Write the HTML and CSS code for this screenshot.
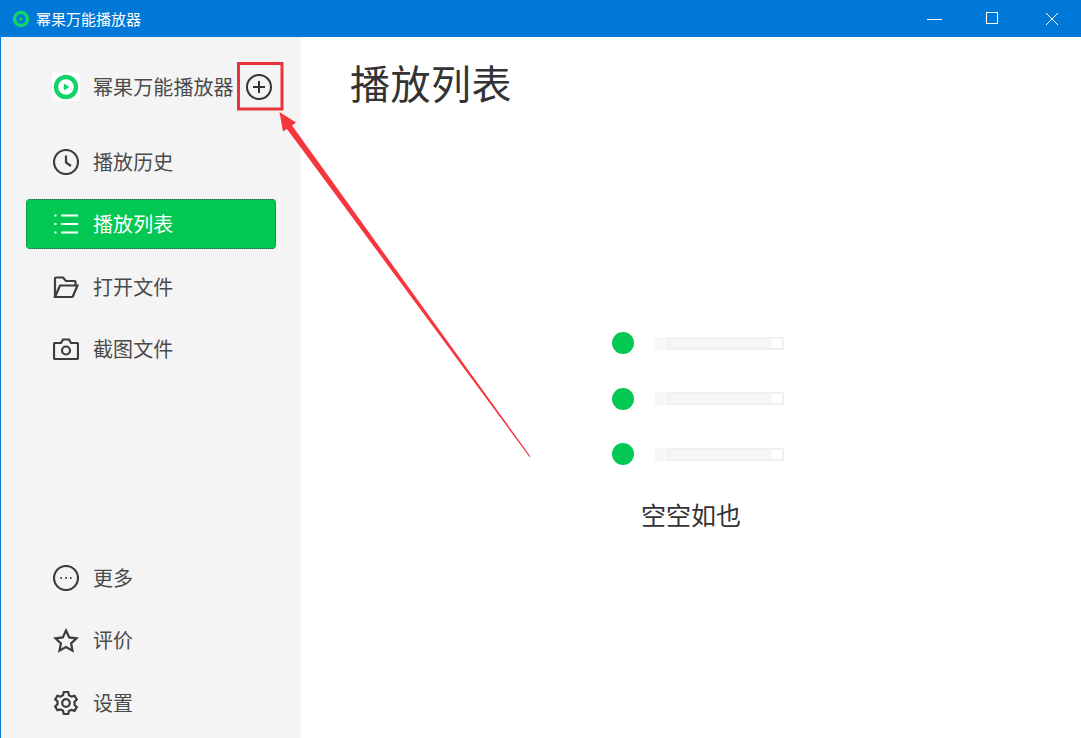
FILE: index.html
```html
<!DOCTYPE html>
<html lang="zh-CN">

<head>
  <meta charset="UTF-8">
  <meta name="viewport" content="width=device-width, initial-scale=1.0">
  <title>幂果万能播放器</title>
  <link rel="stylesheet" href="styles.css">
</head>

<body>
  <header class="titlebar">
    <svg class="title-logo" viewBox="0 0 18 18">
      <circle cx="9" cy="9" r="6.5" fill="none" stroke="#12d26c" stroke-width="3.4"/>
      <path d="M7.800 6.600 11.400 9 7.800 11.400z" fill="#12d26c"/>
    </svg>
    <span class="title-text">幂果万能播放器</span>
    <div class="win-buttons">
      <button class="win-btn"><svg width="16" height="16" viewBox="0 0 16 16"><path d="M1 8.500h15" stroke="#fff" fill="none"/></svg></button>
      <button class="win-btn"><svg width="13" height="13" viewBox="0 0 13 13"><rect x=".5" y=".5" width="11" height="11" stroke="#fff" fill="none"/></svg></button>
      <button class="win-btn"><svg width="14" height="14" viewBox="0 0 14 14"><path d="M1 1 13 13M13 1 1 13" stroke="#fff" fill="none"/></svg></button>
    </div>
  </header>

  <div class="app">
    <aside class="sidebar">
      <div class="nav-group nav-top">
        <div class="brand">
          <span class="brand-logo">
            <svg width="26" height="26" viewBox="0 0 26 26">
              <circle cx="13" cy="13" r="10" fill="none" stroke="#12d26c" stroke-width="4.400"/>
              <path d="M10.800 9.400 16.400 13l-5.600 3.600z" fill="#12d26c"/>
            </svg>
          </span>
          <span class="brand-name">幂果万能播放器</span>
          <svg class="add-icon" width="26" height="26" viewBox="0 0 26 26" fill="none" stroke="#333" stroke-width="2">
            <circle cx="13" cy="13" r="12"/>
            <path d="M13 7v12M7 13h12"/>
          </svg>
        </div>

        <a class="nav-item nav-history">
          <svg class="nav-icon" viewBox="0 0 26 26"><circle cx="13" cy="13" r="12"/><path d="M13 6.500V13.500L18 17"/></svg>
          <span>播放历史</span>
        </a>
        <a class="nav-item active">
          <svg class="nav-icon" viewBox="0 0 26 26"><path d="M8 4.500h17M8 13h17M8 21.500h17"/><path d="M1.500 4.500h2M1.500 13h2M1.500 21.500h2"/></svg>
          <span>播放列表</span>
        </a>
        <a class="nav-item">
          <svg class="nav-icon" viewBox="0 0 26 26"><path d="M2 23V4.500a1 1 0 0 1 1-1h7l3 3.500h8.500a1 1 0 0 1 1 1V11"/><path d="M2 23 7 11.500h17.500L20 22a1 1 0 0 1-1 1z"/></svg>
          <span>打开文件</span>
        </a>
        <a class="nav-item">
          <svg class="nav-icon" viewBox="0 0 26 26"><path d="M2 7h6l2-3.500h6L18 7h6a1 1 0 0 1 1 1v14a1 1 0 0 1-1 1H2a1 1 0 0 1-1-1V8a1 1 0 0 1 1-1z"/><circle cx="13" cy="14.500" r="4"/></svg>
          <span>截图文件</span>
        </a>
      </div>

      <div class="nav-group">
        <a class="nav-item">
          <svg class="nav-icon" viewBox="0 0 26 26"><circle cx="13" cy="13" r="12"/><path d="M7.500 13h1.500M12.300 13h1.500M17 13h1.500"/></svg>
          <span>更多</span>
        </a>
        <a class="nav-item">
          <svg class="nav-icon" viewBox="0 0 26 26"><path d="M13 2.500l3.200 6.900 7.300.9-5.400 5.100 1.400 7.300L13 19.100l-6.500 3.600 1.400-7.300-5.400-5.100 7.300-.9z"/></svg>
          <span>评价</span>
        </a>
        <a class="nav-item">
          <svg class="nav-icon" viewBox="0 0 26 26"><path d="M10.800 2h4.400l.8 3.200 2.500 1.400 3.100-.9 2.200 3.800-2.300 2.300v3l2.300 2.300-2.200 3.800-3.100-.9L16 20.800l-.8 3.200h-4.400l-.8-3.200-2.500-1.400-3.100.9-2.200-3.800 2.300-2.300v-3L2.200 9.500l2.200-3.800 3.100.9L10 5.200z"/><circle cx="13" cy="13" r="3.800"/></svg>
          <span>设置</span>
        </a>
      </div>
    </aside>

    <main class="content">
      <h1>播放列表</h1>
      <div class="empty">
        <div class="empty-row"><i class="dot"></i><div class="line"><b></b></div></div>
        <div class="empty-row"><i class="dot"></i><div class="line"><b></b></div></div>
        <div class="empty-row"><i class="dot"></i><div class="line"><b></b></div></div>
        <p>空空如也</p>
      </div>
    </main>
  </div>

  <!-- red marks drawn over the screenshot -->
  <svg class="marks" width="1081" height="738" viewBox="0 0 1081 738">
    <rect x="238.500" y="63.500" width="43.500" height="45.500" fill="none" stroke="#e8343c" stroke-width="3"/>
    <path d="M279.500 112 296 122.500 292 125.500 530.500 456.500 529.500 457 287 129 283 131.500z" fill="#f5363c"/>
  </svg>
</body>

</html>
```

FILE: styles.css
```css
* {
  box-sizing: border-box;
}

body {
  margin: 0;
  height: 738px;
  overflow: hidden;
  display: flex;
  flex-direction: column;
  font-family: "Noto Sans CJK SC", "Noto Sans", sans-serif;
  color: #4a4a4a;
  background: #fff;
}

.titlebar {
  height: 37px;
  flex: none;
  display: flex;
  align-items: center;
  padding-left: 12px;
  background: #0078d7;
  color: #fff;
}

.title-logo {
  width: 18px;
  height: 18px;
}

.title-text {
  margin-left: 6px;
  font-size: 15px;
}

.win-buttons {
  margin-left: auto;
  display: flex;
}

.win-btn {
  width: 59px;
  height: 37px;
  padding: 0;
  border: none;
  background: none;
  display: flex;
  align-items: center;
  justify-content: center;
}

.app {
  flex: 1;
  display: flex;
  min-height: 0;
  border-left: 1px solid #0078d7;
}

.sidebar {
  width: 300px;
  flex: none;
  padding: 24.800px 25px 10px;
  display: flex;
  flex-direction: column;
  justify-content: space-between;
  background: #f4f4f4;
}

.nav-group {
  display: flex;
  flex-direction: column;
  gap: 12.5px;
}

.brand {
  height: 50px;
  margin-bottom: 12.5px;
  padding-left: 26px;
  display: flex;
  align-items: center;
  white-space: nowrap;
}

.brand-logo {
  width: 28px;
  height: 28px;
  flex: none;
  display: flex;
  align-items: center;
  justify-content: center;
  background: #fff;
}

.brand-name {
  margin-left: 13px;
  padding-bottom: 1px;
  font-size: 20px;
  letter-spacing: .1px;
}

.add-icon {
  flex: none;
  margin-left: 12px;
}

.nav-item {
  height: 50px;
  padding-left: 27px;
  display: flex;
  align-items: center;
  gap: 14px;
  font-size: 20px;
  letter-spacing: .1px;
  border: 1px solid transparent;
  border-radius: 4px;
}

.nav-item span {
  padding-bottom: 2px;
}

.nav-top .nav-item span {
  padding-bottom: 1px;
}

.nav-icon {
  width: 26px;
  height: 26px;
  flex: none;
  margin-left: -1px;
  fill: none;
  stroke: #3c3c3c;
  stroke-width: 2.200;
}

.nav-item.active {
  color: #fff;
  background-color: #03c853;
  background-image:
    repeating-linear-gradient(90deg, #08703a 0 1px, transparent 1px 2px),
    repeating-linear-gradient(90deg, #08703a 0 1px, transparent 1px 2px),
    repeating-linear-gradient(0deg, #08703a 0 1px, transparent 1px 2px),
    repeating-linear-gradient(0deg, #08703a 0 1px, transparent 1px 2px);
  background-size: 100% 1px, 100% 1px, 1px 100%, 1px 100%;
  background-position: top, bottom, left, right;
  background-repeat: no-repeat;
  background-origin: border-box;
}

.nav-item.active .nav-icon {
  stroke: #fff;
}

.content {
  flex: 1;
  padding: 15px 0 0 49px;
}

.content h1 {
  margin: 0;
  font-size: 40px;
  font-weight: 400;
  line-height: 60px;
  letter-spacing: .5px;
  color: #333;
}

.empty {
  margin: 220px 0 0 -49px;
  display: flex;
  flex-direction: column;
  align-items: center;
}

.empty-row {
  width: 172px;
  height: 22px;
  margin-bottom: 33.5px;
  margin-left: 13px;
  display: flex;
  align-items: center;
  gap: 21px;
}

.dot {
  width: 22px;
  height: 22px;
  border-radius: 50%;
  background: #03c853;
}

.line {
  width: 129px;
  height: 13px;
  padding-left: 12px;
  background: #f6f8f7;
}

.line b {
  display: block;
  height: 13px;
  border: 2px solid #eff1f0;
  background: linear-gradient(90deg, #f4f7f6 91%, #fff 91%);
}

.empty p {
  margin: -2px 0 0;
  font-size: 25px;
  line-height: 34px;
  color: #333;
}

.marks {
  position: absolute;
  left: 0;
  top: 0;
  pointer-events: none;
}
```
